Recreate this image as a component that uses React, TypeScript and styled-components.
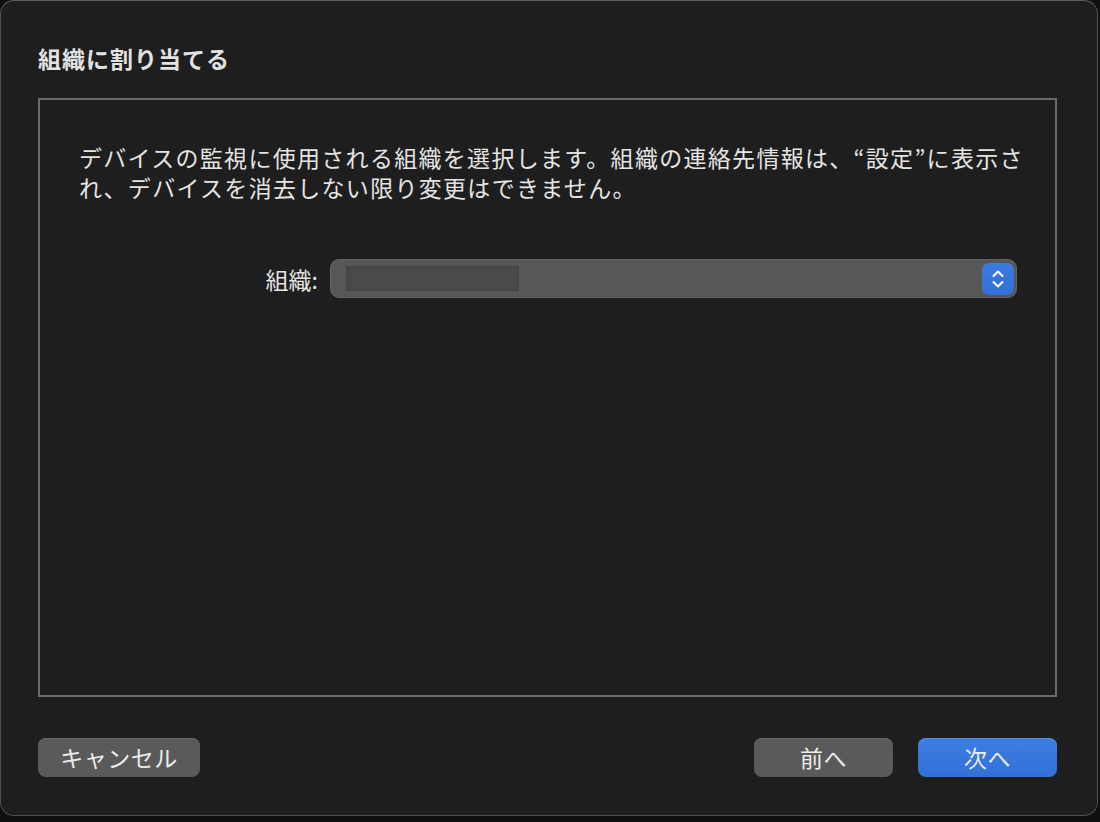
import React from 'react'
import styled, { createGlobalStyle } from 'styled-components'

const GlobalStyle = createGlobalStyle`
  html, body {
    margin: 0;
    padding: 0;
    background: #101010;
  }
  body {
    font-family: 'Noto Sans CJK JP', 'Noto Sans', sans-serif;
    color: #e4e4e4;
  }
`

export default function App() {
  return (
    <>
      <GlobalStyle />
      <Window>
        <Title>組織に割り当てる</Title>
        <Panel>
          <Description>
            デバイスの監視に使用される組織を選択します。組織の連絡先情報は、“設定”に表示され、デバイスを消去しない限り変更はできません。
          </Description>
          <FieldRow>
            <FieldLabel>組織:</FieldLabel>
            <PopupButton>
              <Redacted />
              <Stepper>
                <svg width="14" height="22" viewBox="0 0 14 22" fill="none">
                  <path
                    d="M2.5 8 L7 3.5 L11.5 8"
                    stroke="#ffffff"
                    strokeWidth="2"
                    strokeLinecap="round"
                    strokeLinejoin="round"
                  />
                  <path
                    d="M2.5 14 L7 18.5 L11.5 14"
                    stroke="#ffffff"
                    strokeWidth="2"
                    strokeLinecap="round"
                    strokeLinejoin="round"
                  />
                </svg>
              </Stepper>
            </PopupButton>
          </FieldRow>
        </Panel>
        <Footer>
          <Button $width={162}>キャンセル</Button>
          <ButtonGroup>
            <Button $width={139}>前へ</Button>
            <Button $width={139} $primary>
              次へ
            </Button>
          </ButtonGroup>
        </Footer>
      </Window>
    </>
  )
}

const Window = styled.div`
  box-sizing: border-box;
  width: 1098px;
  height: 816px;
  background: #1e1e1e;
  border: 1px solid #4e4e4e;
  border-top-color: #5c5c5c;
  border-radius: 14px;
  padding: 0 40px 0 37px;
  display: flex;
  flex-direction: column;
`

const Title = styled.h1`
  margin: 40px 0 0;
  height: 57px;
  font-size: 23px;
  line-height: 34px;
  font-weight: 700;
  letter-spacing: 1px;
  color: #e2e2e2;
`

const Panel = styled.div`
  box-sizing: border-box;
  height: 599px;
  border: 2px solid #6a6a6a;
  padding: 42px 20px 0 39px;
`

const Description = styled.p`
  margin: 0;
  max-width: 980px;
  font-size: 23px;
  line-height: 30px;
  letter-spacing: 1.3px;
  color: #e4e4e4;
`

const FieldRow = styled.div`
  display: flex;
  align-items: center;
  gap: 12px;
  margin-top: 57px;
  padding-right: 18px;
`

const FieldLabel = styled.span`
  width: 239px;
  text-align: right;
  font-size: 23px;
  color: #e4e4e4;
`

const PopupButton = styled.div`
  flex: 1;
  box-sizing: border-box;
  height: 39px;
  background: #575757;
  border: 1px solid #636363;
  border-radius: 9px;
  display: flex;
  align-items: center;
  justify-content: space-between;
  padding: 0 2px 0 15px;
`

const Redacted = styled.div`
  width: 173px;
  height: 25px;
  background: #4b4b4b;
  box-shadow: inset 0 0 6px #404040;
`

const Stepper = styled.div`
  width: 32px;
  height: 32px;
  border-radius: 7px;
  background: linear-gradient(#3a7ce3, #3270d6);
  display: flex;
  align-items: center;
  justify-content: center;
`

const Footer = styled.div`
  display: flex;
  justify-content: space-between;
  margin-top: 41px;
`

const ButtonGroup = styled.div`
  display: flex;
  gap: 25px;
`

const Button = styled.button<{ $primary?: boolean; $width: number }>`
  box-sizing: border-box;
  height: 39px;
  width: ${(p) => p.$width}px;
  padding: 0;
  border: none;
  border-radius: 8px;
  font-family: 'Noto Sans CJK JP', sans-serif;
  font-size: 23px;
  line-height: 39px;
  letter-spacing: 0.5px;
  color: #ececec;
  background: ${(p) => (p.$primary ? 'linear-gradient(#3c7ee2, #3270d7)' : '#5a5a5a')};
  box-shadow: inset 0 1px 0 ${(p) => (p.$primary ? '#4f8ce6' : '#666666')};
`
